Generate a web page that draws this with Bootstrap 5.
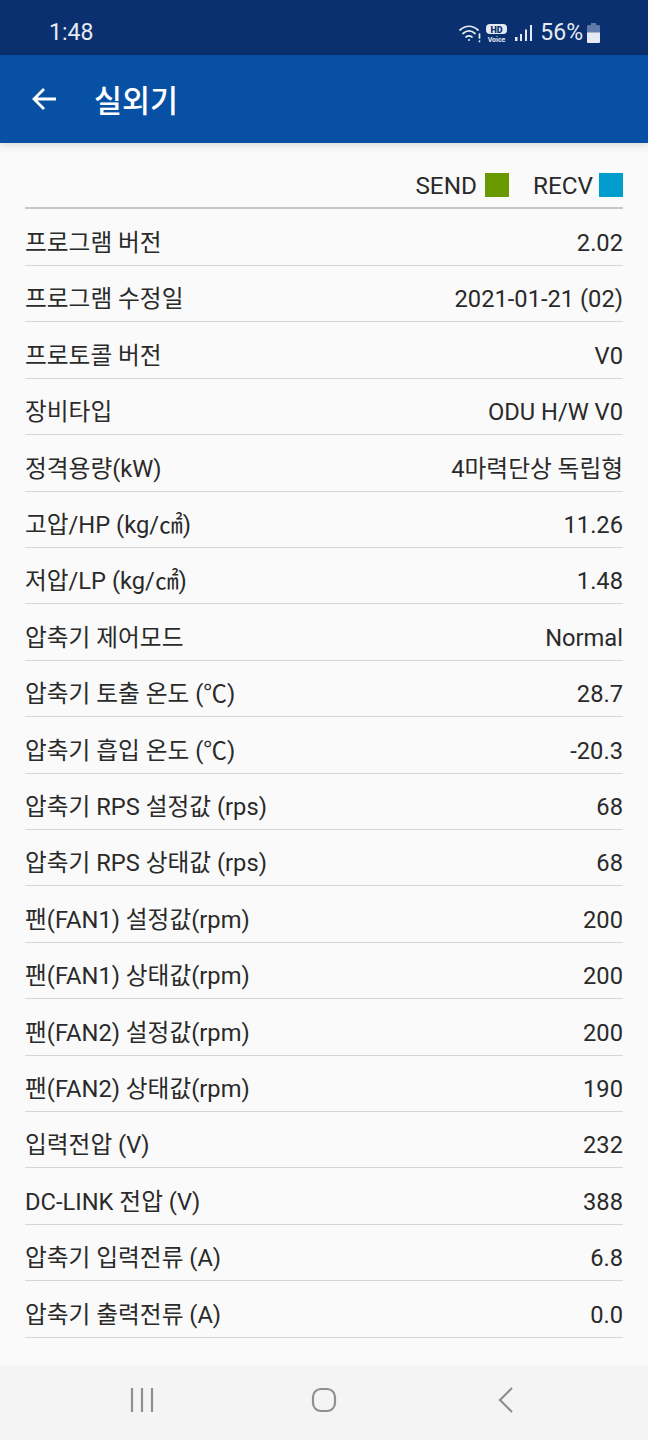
<!DOCTYPE html>
<html lang="ko">
<head>
    <meta charset="UTF-8">
    <meta name="viewport" content="width=device-width, initial-scale=1.0">
    <title>실외기</title>
    <link href="https://cdn.jsdelivr.net/npm/bootstrap@5.3.0/dist/css/bootstrap.min.css" rel="stylesheet">
    <style>
        body {
            width: 648px;
            height: 1440px;
            overflow: hidden;
            background: #fafafa;
            font-family: Roboto, "Noto Sans CJK KR", sans-serif;
            color: #2a2a2a;
        }

        .phone-status {
            height: 55px;
            background: #0a3070;
            color: #e6ebf3;
            padding: 11px 48px 0 49px;
        }
        .phone-status .clock { font-size: 23px; }
        .phone-status .pct { font-size: 23px; margin: 0 4px 0 7px; }
        .icon-gap-hd { margin-left: 5px; }
        .icon-gap-signal { margin-left: 7px; }

        .app-head {
            height: 88px;
            background: #0750a3;
            color: #fff;
            padding: 6px 0 0 31px;
            box-shadow: 0 2px 8px rgba(0, 0, 0, .14);
            position: relative;
        }
        .app-head svg { position: relative; top: -3px; }
        .app-head h1 {
            font-size: 30.5px;
            font-weight: 500;
            margin: 0 0 0 37px;
        }

        .content-area {
            height: 1222px;
            padding: 0 25px;
        }

        .legend-row {
            height: 66px;
            padding-top: 20px;
            font-size: 24.3px;
            border-bottom: 2px solid #c8c8c8;
        }
        .legend-row span { position: relative; top: 1px; }
        .swatch { width: 24px; height: 24px; }
        .swatch-send { background: #6b9a00; margin: 0 24px 0 8px; }
        .swatch-recv { background: #009dce; margin-left: 6px; }

        #rows { padding-top: .5px; }
        .data-row {
            height: 56.42px;
            padding-top: 13px;
            font-size: 23.7px;
            border-bottom: 1px solid #d6d6d6;
        }

        .nav-keys {
            height: 75px;
            background: #f4f4f4;
            padding-bottom: 6px;
        }
        .nav-cell { width: 182px; }
    </style>
</head>
<body>
    <!-- Status bar -->
    <div class="phone-status d-flex align-items-center justify-content-between">
        <span class="clock">1:48</span>
        <div class="d-flex align-items-center">
            <svg width="22" height="20" viewBox="0 0 22 20" fill="none" stroke="#e6ebf3" stroke-width="1.7" stroke-linecap="round">
                <path d="M1 7c5.500-5 12.500-5 18 0"/>
                <path d="M4 10.500c3.800-3.300 8.200-3.300 12 0"/>
                <path d="M7 14c1.900-1.500 4.100-1.500 6 0"/>
                <circle cx="10" cy="17" r="1" fill="#e6ebf3" stroke="none"/>
                <path d="M20.500 11v4M20.500 18v.5"/>
            </svg>
            <svg class="icon-gap-hd" width="22" height="20" viewBox="0 0 22 20">
                <rect x="0" y="1" width="21" height="10" rx="4" fill="#e6ebf3"/>
                <text x="10.500" y="9.500" font-size="9" font-weight="900" text-anchor="middle" fill="#0a3070" font-family="Roboto">HD</text>
                <text x="10.500" y="18.500" font-size="7" font-weight="700" text-anchor="middle" fill="#e6ebf3" font-family="Roboto">Voice</text>
            </svg>
            <svg class="icon-gap-signal" width="18" height="18" viewBox="0 0 18 18" fill="#e6ebf3">
                <rect x="0" y="13" width="2.500" height="4"/>
                <rect x="5" y="10" width="2" height="7"/>
                <rect x="10" y="5.500" width="2" height="11.500"/>
                <rect x="15" y="1" width="2" height="16"/>
            </svg>
            <span class="pct">56%</span>
            <svg width="13" height="20" viewBox="0 0 13 20">
                <path d="M4 0h5v2h2.500a1.500 1.500 0 0 1 1.500 1.500V18.500a1.500 1.500 0 0 1-1.500 1.500h-10A1.500 1.500 0 0 1 0 18.500V3.500A1.500 1.500 0 0 1 1.500 2H4z" fill="#5f7ba9"/>
                <path d="M0 9.500h13v9a1.500 1.500 0 0 1-1.500 1.500h-10A1.500 1.500 0 0 1 0 18.500z" fill="#e6ebf3"/>
            </svg>
        </div>
    </div>

    <!-- App bar -->
    <div class="app-head d-flex align-items-center">
        <svg width="26" height="24" viewBox="0 0 26 24" fill="none" stroke="#fff" stroke-width="2.800">
            <path d="M25 12H3M13 2 3 12l10 10"/>
        </svg>
        <h1>실외기</h1>
    </div>

    <!-- Data list -->
    <div class="content-area">
        <div class="legend-row d-flex align-items-center justify-content-end">
            <span>SEND</span><div class="swatch swatch-send"></div>
            <span>RECV</span><div class="swatch swatch-recv"></div>
        </div>
        <div id="rows"></div>
    </div>

    <!-- Android nav keys -->
    <div class="nav-keys d-flex align-items-center justify-content-center">
        <div class="nav-cell d-flex justify-content-center">
            <svg width="26" height="26" viewBox="0 0 26 26" stroke="#8f8f8f" stroke-width="2.200">
                <path d="M3 1v24M13 1v24M23 1v24"/>
            </svg>
        </div>
        <div class="nav-cell d-flex justify-content-center">
            <svg width="26" height="26" viewBox="0 0 26 26" fill="none" stroke="#8f8f8f" stroke-width="2.200">
                <rect x="2" y="2" width="22" height="22" rx="8"/>
            </svg>
        </div>
        <div class="nav-cell d-flex justify-content-center">
            <svg width="16" height="28" viewBox="0 0 16 28" fill="none" stroke="#8f8f8f" stroke-width="2.200">
                <path d="M14 2 2 14l12 12"/>
            </svg>
        </div>
    </div>

    <script>
        const items = [
            ["프로그램 버전", "2.02"],
            ["프로그램 수정일", "2021-01-21 (02)"],
            ["프로토콜 버전", "V0"],
            ["장비타입", "ODU H/W V0"],
            ["정격용량(kW)", "4마력단상 독립형"],
            ["고압/HP (kg/㎠)", "11.26"],
            ["저압/LP (kg/㎠)", "1.48"],
            ["압축기 제어모드", "Normal"],
            ["압축기 토출 온도 (℃)", "28.7"],
            ["압축기 흡입 온도 (℃)", "-20.3"],
            ["압축기 RPS 설정값 (rps)", "68"],
            ["압축기 RPS 상태값 (rps)", "68"],
            ["팬(FAN1) 설정값(rpm)", "200"],
            ["팬(FAN1) 상태값(rpm)", "200"],
            ["팬(FAN2) 설정값(rpm)", "200"],
            ["팬(FAN2) 상태값(rpm)", "190"],
            ["입력전압 (V)", "232"],
            ["DC-LINK 전압 (V)", "388"],
            ["압축기 입력전류 (A)", "6.8"],
            ["압축기 출력전류 (A)", "0.0"]
        ];
        document.getElementById("rows").innerHTML = items.map(([k, v]) =>
            `<div class="data-row d-flex align-items-center justify-content-between"><span>${k}</span><span>${v}</span></div>`
        ).join("");
    </script>
    <script src="https://cdn.jsdelivr.net/npm/bootstrap@5.3.0/dist/js/bootstrap.bundle.min.js"></script>
</body>
</html>
